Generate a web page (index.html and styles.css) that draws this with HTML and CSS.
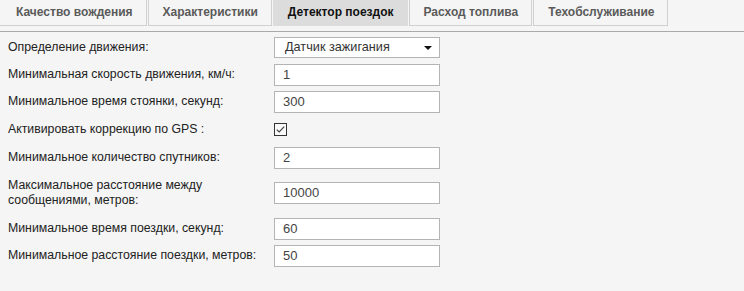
FILE: index.html
```html
<!DOCTYPE html>
<html lang="ru">
<head>
<meta charset="utf-8">
<link rel="stylesheet" href="styles.css">
</head>
<body>
<div class="tabs">
  <div class="tab">Качество вождения</div>
  <div class="tab">Характеристики</div>
  <div class="tab active">Детектор поездок</div>
  <div class="tab">Расход топлива</div>
  <div class="tab">Техобслуживание</div>
</div>
<div class="form">
  <div class="row">
    <div class="label">Определение движения:</div>
    <div class="select"><span>Датчик зажигания</span><span class="arrow"></span></div>
  </div>
  <div class="row">
    <div class="label">Минимальная скорость движения, км/ч:</div>
    <div class="input">1</div>
  </div>
  <div class="row">
    <div class="label">Минимальное время стоянки, секунд:</div>
    <div class="input">300</div>
  </div>
  <div class="row row-check">
    <div class="label">Активировать коррекцию по GPS :</div>
    <div class="check"><svg width="13" height="13" viewBox="0 0 13 13"><rect x="0.5" y="0.5" width="12" height="12" fill="#fafafa" stroke="#333"/><path d="M2.8 6.6 L5.2 9 L10.2 3.6" fill="none" stroke="#444" stroke-width="1.2"/></svg></div>
  </div>
  <div class="row">
    <div class="label">Минимальное количество спутников:</div>
    <div class="input">2</div>
  </div>
  <div class="row">
    <div class="label label-wide">Максимальное расстояние между<br>сообщениями, метров:</div>
    <div class="input">10000</div>
  </div>
  <div class="row">
    <div class="label">Минимальное время поездки, секунд:</div>
    <div class="input">60</div>
  </div>
  <div class="row">
    <div class="label">Минимальное расстояние поездки, метров:</div>
    <div class="input">50</div>
  </div>
</div>
</body>
</html>
```
FILE: styles.css
```css
html, body {
  margin: 0;
  padding: 0;
  background: #f5f5f5;
  font-family: "Liberation Sans", Arial, sans-serif;
  color: #222;
}
.tabs {
  display: flex;
  gap: 1px;
  padding-bottom: 5px;
  border-bottom: 1px solid #aaa;
  margin-top: -1px;
}
.tab {
  height: 25px;
  line-height: 25px;
  padding: 0 13px 0 14px;
  border: 1px solid #d0d0d0;
  background: #f5f5f5;
  font-size: 12px;
  font-weight: bold;
  color: #5a5a5a;
  white-space: nowrap;
}
.tab:first-child {
  margin-left: -1px;
  padding-left: 16px;
}
.tab.active {
  background: #dcdcdc;
  border-color: #dcdcdc;
  color: #111;
}
.form {
  display: flex;
  flex-direction: column;
  gap: 4px;
  padding: 4px 0 0 8px;
}
.row {
  display: flex;
  align-items: center;
  min-height: 23px;
}
.row-check {
  min-height: 25px;
}
.label {
  width: 266px;
  font-size: 12.3px;
  line-height: 15px;
  padding: 4px 0;
  color: #222;
}
.label-wide {
  padding: 5px 0;
}
.input {
  box-sizing: border-box;
  width: 166px;
  height: 22px;
  border: 1px solid #b4b4b4;
  background: #fff;
  padding: 0 8px;
  font-size: 13px;
  line-height: 20px;
  color: #444;
}
.select {
  box-sizing: border-box;
  width: 166px;
  height: 21px;
  border: 1px solid #b4b4b4;
  background: #fff;
  padding: 0 7px 0 10px;
  font-size: 12.7px;
  line-height: 19px;
  color: #333;
  display: flex;
  justify-content: space-between;
  align-items: center;
}
.arrow {
  width: 0;
  height: 0;
  border-left: 4px solid transparent;
  border-right: 4px solid transparent;
  border-top: 4px solid #111;
}
.check {
  display: flex;
  height: 13px;
}
```
